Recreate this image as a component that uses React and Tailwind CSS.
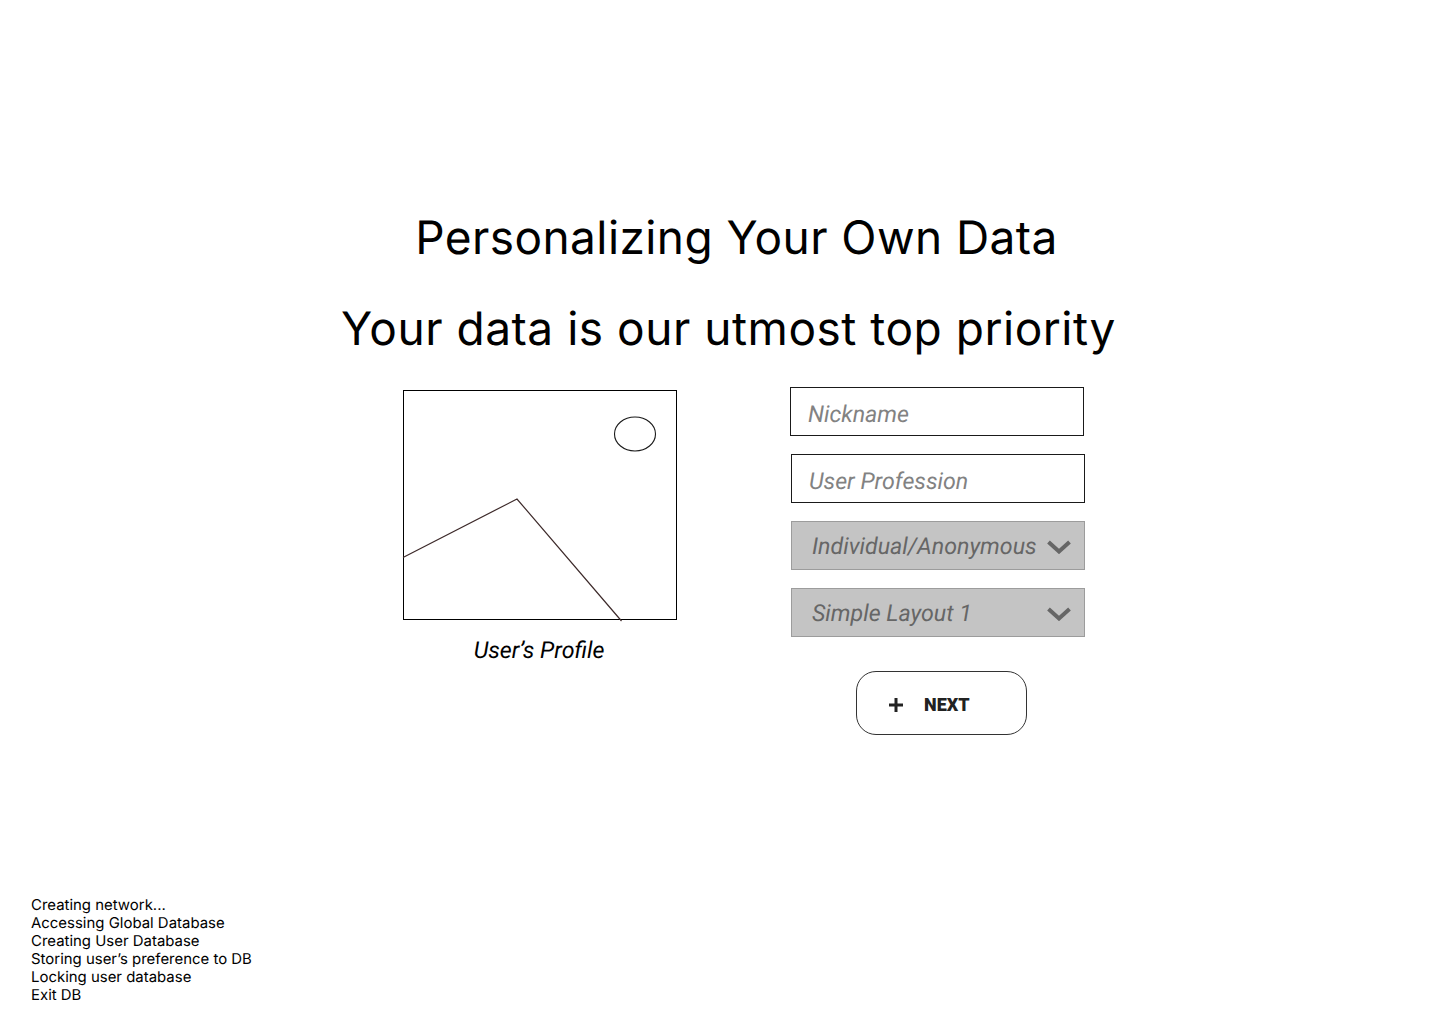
function Chevron() {
  return (
    <svg width="24" height="14" viewBox="0 0 24 14" fill="none" className="shrink-0">
      <path d="M1.5 2 L12 11.5 L22.5 2" stroke="#666666" strokeWidth="4" />
    </svg>
  );
}

function Field({ label }) {
  return (
    <div className="h-[49px] w-[294px] border border-[#1a1a1a] bg-white pl-[17px] flex items-center text-[23.2px] italic text-[#828282] pt-[5px]">
      {label}
    </div>
  );
}

function Select({ label }) {
  return (
    <div className="h-[49px] w-[294px] border border-[#9c9c9c] bg-[#c4c4c4] pl-[20px] pr-[13px] pt-[1px] flex items-center justify-between text-[23.2px] italic text-[#666666]">
      <span>{label}</span>
      <span className="mt-[2px] flex"><Chevron /></span>
    </div>
  );
}

export default function App() {
  return (
    <div className="w-[1440px] h-[1024px] bg-white flex flex-col font-['Roboto',sans-serif] overflow-hidden [text-rendering:geometricPrecision]">
      <div className="pt-[209px] pl-[33px] flex flex-col items-center font-['Inter',sans-serif] text-[46px] leading-[58px] text-black">
        <h1 className="tracking-[0.42px]">Personalizing Your Own Data</h1>
        <h2 className="mt-[33px] -ml-[16px] tracking-[0.53px]">Your data is our utmost top priority</h2>
      </div>

      <div className="flex items-start pl-[403px] mt-[29px]">
        <div className="w-[274px] mt-[3px] flex flex-col items-center">
          <div className="w-[274px] h-[230px] border border-black bg-white">
            <svg width="274" height="230" viewBox="0 0 274 230" fill="none" className="-m-px overflow-visible block">
              <ellipse cx="232" cy="44" rx="20.5" ry="17" stroke="#1a1a1a" strokeWidth="1.1" />
              <path d="M0 167.5 L114 109 L218.5 231" stroke="#3d2a2a" strokeWidth="1.2" />
            </svg>
          </div>
          <p className="mt-[16px] -ml-[2px] text-[23.2px] leading-[28px] italic text-black">User’s Profile</p>
        </div>

        <div className="ml-[113px] flex flex-col">
          <Field label="Nickname" />
          <div className="ml-px mt-[18px] flex flex-col gap-[18px]">
            <Field label="User Profession" />
            <Select label="Individual/Anonymous" />
            <Select label="Simple Layout 1" />
          </div>
          <button className="ml-[66px] mt-[34px] w-[171px] h-[64px] rounded-[20px] border border-[#333333] bg-white flex items-center pl-[32px] pt-[3px] text-[18px] font-black text-[#222222]">
            <svg width="14" height="14" viewBox="0 0 14 14" className="shrink-0" fill="none">
              <path d="M7 0 V14 M0 7 H14" stroke="#222222" strokeWidth="3" />
            </svg>
            <span className="ml-[21px] leading-[20px]">NEXT</span>
          </button>
        </div>
      </div>

      <div className="mt-auto pl-[31px] pb-[20px] font-['Inter',sans-serif] text-[14.95px] leading-[18px] text-black">
        <p>Creating network...</p>
        <p>Accessing Global Database</p>
        <p>Creating User Database</p>
        <p>Storing user’s preference to DB</p>
        <p>Locking user database</p>
        <p>Exit DB</p>
      </div>
    </div>
  );
}
